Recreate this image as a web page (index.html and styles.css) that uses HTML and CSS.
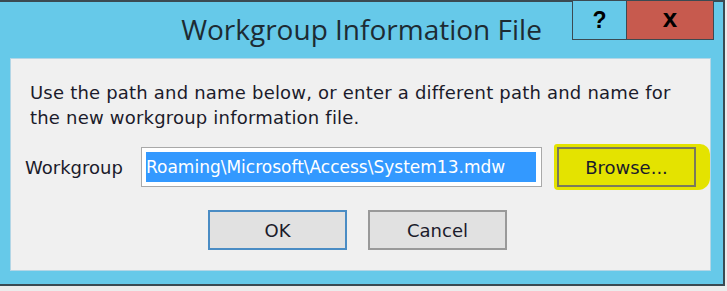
FILE: index.html
```html
<!DOCTYPE html>
<html lang="en">
<head>
    <meta charset="UTF-8">
    <title>Workgroup Information File</title>
    <link rel="stylesheet" href="styles.css">
</head>
<body>
    <div class="window">
        <div class="titlebar">
            <h1 class="title">Workgroup Information File</h1>
            <div class="caption-buttons">
                <div class="cap-btn help">?</div>
                <div class="cap-btn close">x</div>
            </div>
        </div>
        <div class="panel">
            <p class="info">Use the path and name below, or enter a different path and name for the new workgroup information file.</p>
            <div class="row">
                <label class="label">Workgroup</label>
                <div class="input"><span class="selected">Roaming\Microsoft\Access\System13.mdw</span></div>
                <div class="highlight">
                    <button class="btn browse">Browse...</button>
                </div>
            </div>
            <div class="actions">
                <button class="btn ok">OK</button>
                <button class="btn">Cancel</button>
            </div>
        </div>
    </div>
</body>
</html>
```

FILE: styles.css
```css
body {
    margin: 0;
    padding: 0;
    background: #ececec;
    font-family: 'DejaVu Sans', sans-serif;
}
.window {
    position: relative;
    width: 725px;
    height: 286px;
    box-sizing: border-box;
    background: #66c9e9;
    border: 2px solid #3b4a52;
    border-left: none;
    display: flex;
    flex-direction: column;
}
.titlebar {
    height: 56px;
    display: flex;
    justify-content: center;
    align-items: center;
}
.title {
    margin: 0 0 2px;
    font-family: 'Open Sans', sans-serif;
    font-weight: normal;
    font-size: 28px;
    color: #1d2b33;
}
.caption-buttons {
    position: absolute;
    top: -2px;
    left: 572px;
    display: flex;
}
.cap-btn {
    height: 40px;
    box-sizing: border-box;
    border: 1px solid #3b4a52;
    display: flex;
    align-items: center;
    justify-content: center;
    font-family: 'Liberation Sans', sans-serif;
    font-weight: bold;
    font-size: 23px;
    color: #000;
}
.help {
    width: 54px;
    background: #66c9e9;
    border-right: none;
}
.close {
    width: 88px;
    background: #c75a4e;
    font-size: 26px;
    padding-bottom: 3px;
}
.panel {
    margin: 0 12px 13px 10px;
    flex: 1;
    background: #f0f0f0;
    border: 1px solid #b3d6e6;
    padding: 21px 0 0 19px;
}
.info {
    margin: 0;
    font-size: 18px;
    letter-spacing: 0.2px;
    line-height: 25px;
    color: #1b1b2b;
    width: 665px;
}
.row {
    display: flex;
    align-items: center;
    margin-top: 14px;
    margin-left: -5px;
}
.label {
    font-size: 18px;
    color: #1b1b2b;
    width: 116px;
}
.input {
    width: 401px;
    height: 40px;
    box-sizing: border-box;
    background: #fff;
    border: 1px solid #a9a9a9;
    padding: 4px 5px 4px 4px;
    display: flex;
}
.selected {
    flex: 1;
    background: #3399ff;
    color: #fff;
    font-size: 17px;
    line-height: 30px;
    white-space: nowrap;
    overflow: hidden;
}
.highlight {
    margin-left: 12px;
    padding: 3px 14px 3px 3px;
    background: #e4e300;
    border-radius: 3px 10px 12px 4px;
}
.btn {
    width: 139px;
    height: 40px;
    background: #e1e1e1;
    border: 2px solid #999;
    font-family: 'DejaVu Sans', sans-serif;
    font-size: 18px;
    color: #1b1b2b;
    padding: 0;
}
.browse {
    background: transparent;
    border-color: #7a7a5a;
}
.actions {
    display: flex;
    gap: 21px;
    margin-top: 20px;
    margin-left: 178px;
}
.ok {
    border-color: #4a8cc4;
}
```
